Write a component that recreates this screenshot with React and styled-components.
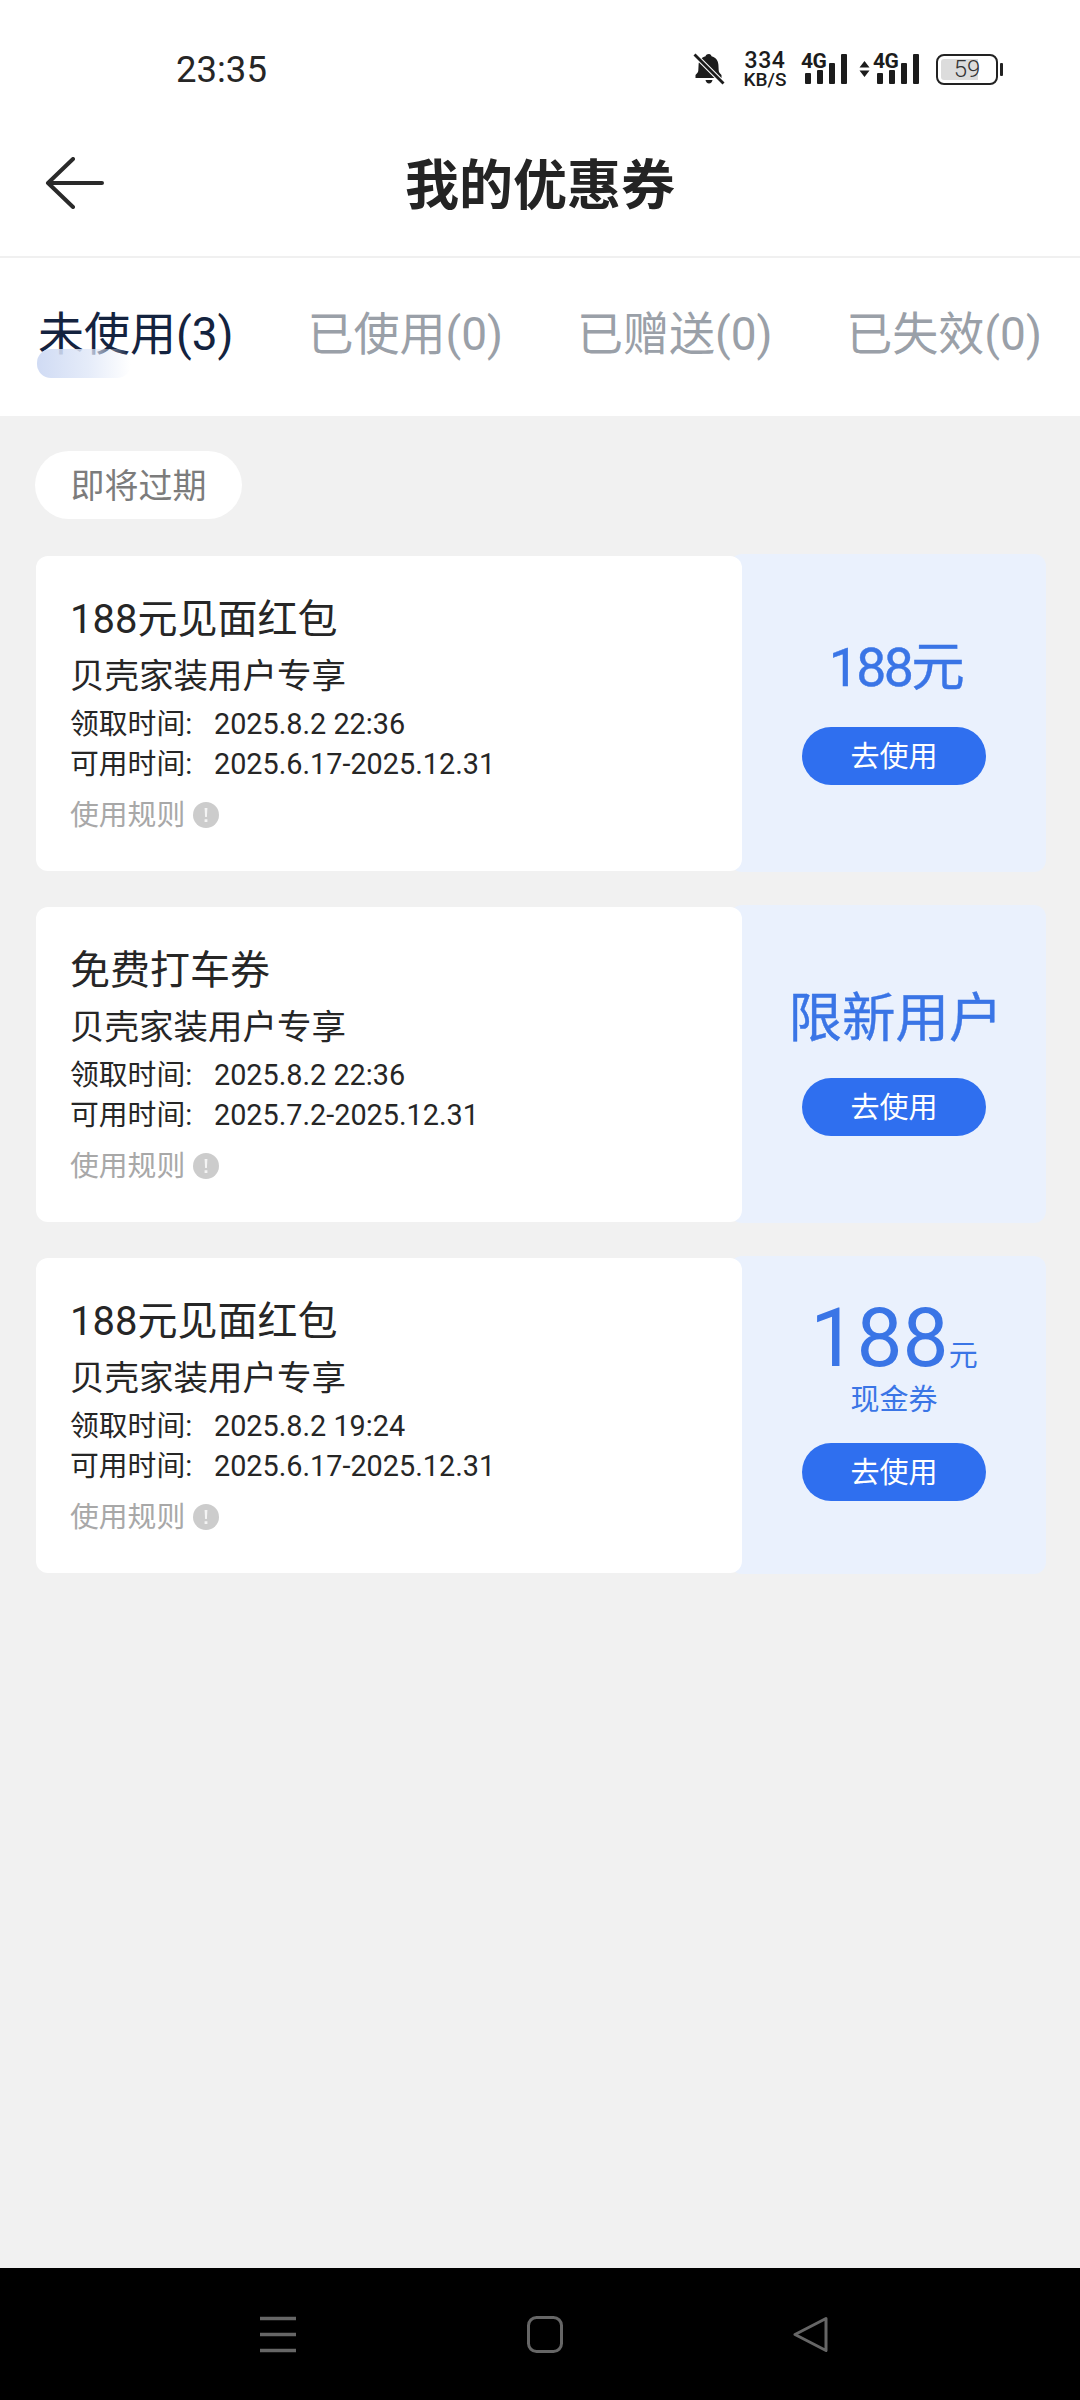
import React from 'react';
import styled, { createGlobalStyle } from 'styled-components';

const FONT = 'Roboto, "Noto Sans CJK SC", sans-serif';

const GlobalStyle = createGlobalStyle`
  html, body {
    margin: 0;
    padding: 0;
    background: #f0f0f0;
  }
  * {
    box-sizing: border-box;
  }
`;

const Page = styled.div`
  width: 1080px;
  height: 2400px;
  display: flex;
  flex-direction: column;
  overflow: hidden;
  font-family: ${FONT};
`;

const StatusBar = styled.div`
  height: 110px;
  padding: 28px 77px 0 176px;
  display: flex;
  align-items: center;
  justify-content: space-between;
  background: #fff;
  color: #1c1c1c;
`;

const Clock = styled.div`
  font-size: 36.5px;
  color: #262626;
`;

const StatusIcons = styled.div`
  display: flex;
  align-items: center;
  gap: 15px;
`;

const Speed = styled.div`
  width: 42px;
  margin-left: 4px;
  display: flex;
  flex-direction: column;
  align-items: center;
  font-weight: 500;
`;

const SpeedValue = styled.span`
  font-size: 23px;
  line-height: 20px;
  letter-spacing: 0.6px;
`;

const SpeedUnit = styled.span`
  font-size: 19px;
  line-height: 17px;
  white-space: nowrap;
`;

const SignalGroup = styled.div`
  margin-left: -3px;
  display: flex;
  align-items: center;
  gap: 3px;
`;

const SignalBox = styled.div`
  position: relative;
  width: 46px;
  height: 32px;
`;

const SignalLabel = styled.span`
  position: absolute;
  left: 0;
  top: 0;
  font-size: 21px;
  line-height: 16px;
  font-weight: 700;
  letter-spacing: -0.6px;
`;

const Battery = styled.div`
  display: flex;
  align-items: center;
  gap: 2px;
  margin-left: 2px;
`;

const BatteryBody = styled.div`
  width: 62px;
  height: 31px;
  padding: 3px;
  border: 2px solid #222;
  border-radius: 8px;
`;

const BatteryFill = styled.div`
  height: 100%;
  display: flex;
  align-items: center;
  justify-content: center;
  font-size: 24px;
  font-weight: 300;
  color: #333;
  border-radius: 3px;
  background: linear-gradient(90deg, #dcdcdc ${(p) => p.$level}%, #fff ${(p) => p.$level}%);
`;

const BatteryTip = styled.div`
  width: 3px;
  height: 13px;
  background: #222;
  border-radius: 1px;
`;

const Header = styled.header`
  height: 148px;
  padding: 0 45px;
  display: grid;
  grid-template-columns: 1fr auto 1fr;
  align-items: center;
  background: #fff;
  border-bottom: 2px solid #f0f0f0;
`;

const BackIcon = styled.svg`
  width: 60px;
  height: 52px;
`;

const Title = styled.h1`
  margin: 8px 0 0;
  font-size: 54px;
  line-height: 70px;
  font-weight: 700;
  color: #242424;
`;

const Tabs = styled.nav`
  height: 158px;
  padding: 0 38px 6px;
  display: flex;
  align-items: center;
  justify-content: space-between;
  background: #fff;
`;

const Tab = styled.div`
  position: relative;
  font-size: 46px;
  line-height: 60px;
  white-space: nowrap;
  color: ${(p) => (p.$active ? '#14233f' : '#9aa0a8')};
`;

const TabMark = styled.span`
  position: absolute;
  left: -1px;
  top: 45px;
  width: 94px;
  height: 29px;
  border-radius: 14px;
  background: linear-gradient(90deg, #ccd8f3 0%, rgba(224, 232, 248, 0.9) 55%, rgba(255, 255, 255, 0) 100%);
  opacity: 0.92;
`;

const Content = styled.main`
  flex: 1;
  padding: 35px 34px 0 35px;
  display: flex;
  flex-direction: column;
  align-items: flex-start;
  background: #f1f1f1;
`;

const ExpireTag = styled.div`
  width: 207px;
  height: 68px;
  margin-bottom: 35px;
  padding-bottom: 4px;
  display: flex;
  align-items: center;
  justify-content: center;
  font-size: 34px;
  color: #7c7c7c;
  background: #fff;
  border-radius: 34px;
`;

const CouponList = styled.div`
  width: 100%;
  display: flex;
  flex-direction: column;
  gap: 33px;
`;

const Coupon = styled.article`
  margin-left: 1px;
  display: flex;
  align-items: center;
`;

const CouponInfo = styled.div`
  position: relative;
  z-index: 1;
  width: 706px;
  height: 315px;
  padding: 39px 0 0 34px;
  background: #fff;
  border-radius: 12px;
  color: #262626;
`;

const CouponName = styled.div`
  font-size: 40px;
  line-height: 50px;
`;

const CouponScope = styled.div`
  margin-top: 9px;
  font-size: 34.5px;
  line-height: 44px;
`;

const DateList = styled.div`
  margin-top: 6px;
`;

const DateRow = styled.div`
  display: flex;
  font-size: 28.8px;
  line-height: 40px;
`;

const DateLabel = styled.span`
  width: 144px;
`;

const Rules = styled.div`
  margin-top: 11px;
  display: flex;
  align-items: center;
  gap: 8px;
  font-size: 28.8px;
  line-height: 40px;
  color: #a8a8a8;
`;

const InfoIcon = styled.svg`
  width: 26px;
  height: 26px;
`;

const CouponSide = styled.div`
  width: 316px;
  height: 318px;
  margin-left: -12px;
  padding: ${(p) => (p.$stacked ? '42px' : '84px')} 0 0 12px;
  display: flex;
  flex-direction: column;
  align-items: center;
  background: #eaf1fd;
  border-radius: 12px;
  color: #3a75e6;
`;

const Amount = styled.div`
  height: 60px;
  margin: 0 0 29px 3px;
  font-size: 53.5px;
  line-height: 60px;
  white-space: nowrap;
  letter-spacing: ${(p) => (p.$tight ? '-2.5px' : '0')};
  -webkit-text-stroke: 0.4px #3a75e6;
`;

const BigAmount = styled.div`
  height: 80px;
  display: flex;
  align-items: baseline;
  font-size: 82px;
  line-height: 80px;
`;

const BigUnit = styled.span`
  font-size: 29px;
`;

const AmountNote = styled.div`
  margin: 3px 0 24px;
  font-size: 29px;
  line-height: 38px;
`;

const UseButton = styled.button`
  width: 184px;
  height: 58px;
  padding: 0 0 4px;
  border: none;
  border-radius: 29px;
  background: #2f6fef;
  color: #fff;
  font-family: inherit;
  font-size: 29px;
`;

const NavBar = styled.div`
  height: 132px;
  padding: 0 251px 0 260px;
  display: flex;
  align-items: center;
  justify-content: space-between;
  background: #000;
`;

const NavIcon = styled.svg`
  width: 36px;
  height: 37px;
`;

const tabs = [
  { label: '未使用(3)', active: true },
  { label: '已使用(0)' },
  { label: '已赠送(0)' },
  { label: '已失效(0)' },
];

const coupons = [
  { name: '188元见面红包', got: '2025.8.2 22:36', valid: '2025.6.17-2025.12.31', amount: '188元', tight: true },
  { name: '免费打车券', got: '2025.8.2 22:36', valid: '2025.7.2-2025.12.31', amount: '限新用户' },
  { name: '188元见面红包', got: '2025.8.2 19:24', valid: '2025.6.17-2025.12.31', big: '188', unit: '元', note: '现金券' },
];

function SignalBars() {
  return (
    <SignalBox>
      <SignalLabel>4G</SignalLabel>
      <svg width="46" height="32" viewBox="0 0 46 32" fill="#1c1c1c">
        <rect x="4" y="20" width="6" height="11" rx="1" />
        <rect x="16" y="17" width="6" height="14" rx="1" />
        <rect x="28" y="10" width="6" height="21" rx="1" />
        <rect x="40" y="1" width="6" height="30" rx="1" />
      </svg>
    </SignalBox>
  );
}

function StatusRow() {
  return (
    <StatusBar>
      <Clock>23:35</Clock>
      <StatusIcons>
        <svg width="32" height="32" viewBox="0 0 32 32">
          <path
            d="M16 1c1.400 0 2.400 1 2.500 2.300 4.200 1 6.700 4.200 6.900 8.500l.3 5.800c.1 1.700 1.100 3 2.800 4.400v3H2.500v-3c1.700-1.400 2.700-2.700 2.800-4.400l.3-5.800c.2-4.300 2.700-7.500 7-8.500C12.700 2 13.600 1 16 1z"
            fill="#1c1c1c"
          />
          <path d="M12.500 27h7c-.3 2-1.700 3.400-3.500 3.400s-3.200-1.400-3.500-3.400z" fill="#1c1c1c" />
          <path d="M1.500 1.500l29 29" stroke="#fff" strokeWidth="5" />
          <path d="M1.500 1.500l29 29" stroke="#1c1c1c" strokeWidth="2.800" />
        </svg>
        <Speed>
          <SpeedValue>334</SpeedValue>
          <SpeedUnit>KB/S</SpeedUnit>
        </Speed>
        <SignalBars />
        <SignalGroup>
          <svg width="11" height="16" viewBox="0 0 11 16" fill="#1c1c1c">
            <path d="M5.500 0l5 6.500H.5zM5.500 16l-5-6.500h10z" />
          </svg>
          <SignalBars />
        </SignalGroup>
        <Battery>
          <BatteryBody>
            <BatteryFill $level={72}>59</BatteryFill>
          </BatteryBody>
          <BatteryTip />
        </Battery>
      </StatusIcons>
    </StatusBar>
  );
}

function CouponCard({ coupon }) {
  return (
    <Coupon>
      <CouponInfo>
        <CouponName>{coupon.name}</CouponName>
        <CouponScope>贝壳家装用户专享</CouponScope>
        <DateList>
          <DateRow>
            <DateLabel>领取时间:</DateLabel>
            {coupon.got}
          </DateRow>
          <DateRow>
            <DateLabel>可用时间:</DateLabel>
            {coupon.valid}
          </DateRow>
        </DateList>
        <Rules>
          使用规则
          <InfoIcon viewBox="0 0 26 26">
            <circle cx="13" cy="13" r="13" fill="#cccccc" />
            <path d="M11.600 6h2.800l-.5 9h-1.800zM11.600 17.200h2.800V20h-2.800z" fill="#f4f4f4" />
          </InfoIcon>
        </Rules>
      </CouponInfo>
      <CouponSide $stacked={Boolean(coupon.big)}>
        {coupon.big ? (
          <>
            <BigAmount>
              {coupon.big}
              <BigUnit>{coupon.unit}</BigUnit>
            </BigAmount>
            <AmountNote>{coupon.note}</AmountNote>
          </>
        ) : (
          <Amount $tight={coupon.tight}>{coupon.amount}</Amount>
        )}
        <UseButton>去使用</UseButton>
      </CouponSide>
    </Coupon>
  );
}

export default function App() {
  return (
    <Page>
      <GlobalStyle />
      <StatusRow />
      <Header>
        <BackIcon viewBox="0 0 60 52" fill="none" stroke="#2a2a2a" strokeWidth="4" strokeLinecap="round" strokeLinejoin="round">
          <path d="M57 26H3M28 2L3 26l25 24" />
        </BackIcon>
        <Title>我的优惠券</Title>
      </Header>
      <Tabs>
        {tabs.map((tab) => (
          <Tab key={tab.label} $active={tab.active}>
            {tab.label}
            {tab.active && <TabMark />}
          </Tab>
        ))}
      </Tabs>
      <Content>
        <ExpireTag>即将过期</ExpireTag>
        <CouponList>
          {coupons.map((coupon, i) => (
            <CouponCard key={i} coupon={coupon} />
          ))}
        </CouponList>
      </Content>
      <NavBar>
        <NavIcon viewBox="0 0 36 37" stroke="#666" strokeWidth="3.500">
          <path d="M0 2.500h36M0 18.500h36M0 34.500h36" />
        </NavIcon>
        <NavIcon viewBox="0 0 36 37" fill="none" stroke="#666" strokeWidth="3">
          <rect x="1.500" y="1.500" width="33" height="34" rx="8" />
        </NavIcon>
        <NavIcon viewBox="0 0 36 37" fill="none" stroke="#666" strokeWidth="3" strokeLinejoin="round">
          <path d="M33 2.500L2 18.500l31 16z" />
        </NavIcon>
      </NavBar>
    </Page>
  );
}
